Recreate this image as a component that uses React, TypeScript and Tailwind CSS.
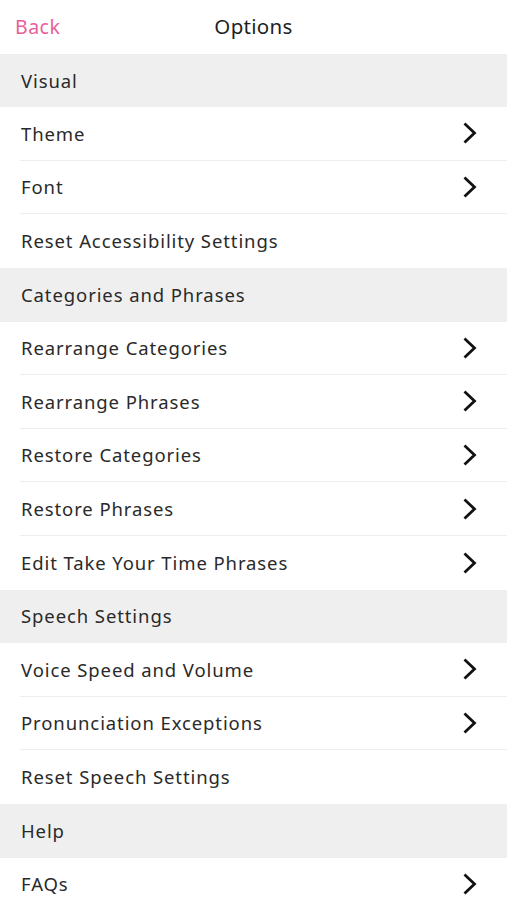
import type { ReactNode } from 'react'

type Item = { label: string; chevron?: boolean }
type Section = { title: string; items: Item[] }

const sections: Section[] = [
  {
    title: 'Visual',
    items: [
      { label: 'Theme', chevron: true },
      { label: 'Font', chevron: true },
      { label: 'Reset Accessibility Settings' },
    ],
  },
  {
    title: 'Categories and Phrases',
    items: [
      { label: 'Rearrange Categories', chevron: true },
      { label: 'Rearrange Phrases', chevron: true },
      { label: 'Restore Categories', chevron: true },
      { label: 'Restore Phrases', chevron: true },
      { label: 'Edit Take Your Time Phrases', chevron: true },
    ],
  },
  {
    title: 'Speech Settings',
    items: [
      { label: 'Voice Speed and Volume', chevron: true },
      { label: 'Pronunciation Exceptions', chevron: true },
      { label: 'Reset Speech Settings' },
    ],
  },
  {
    title: 'Help',
    items: [{ label: 'FAQs', chevron: true }],
  },
]

function Chevron() {
  return (
    <svg width="16" height="22" viewBox="0 0 16 22" fill="none" className="shrink-0">
      <path d="M3.5 2.5 L12.5 11 L3.5 19.5" stroke="#111" strokeWidth="2.8" strokeLinecap="square" />
    </svg>
  )
}

function SectionHeader({ children }: { children: ReactNode }) {
  return (
    <div className="h-[53.6px] bg-[#efefef] flex items-center pl-[21px] text-[18.5px] tracking-[0.9px] text-[#2a2a2a]">
      {children}
    </div>
  )
}

function Row({ item, last }: { item: Item; last: boolean }) {
  return (
    <div className="h-[53.6px] bg-white pl-[20px]">
      <div className={`h-full flex items-center justify-between pr-[29px] ${last ? '' : 'border-b border-[#eeeeee]'}`}>
        <span className="pl-[1px] text-[18.5px] tracking-[0.9px] text-[#2a2a2a]">{item.label}</span>
        {item.chevron && <Chevron />}
      </div>
    </div>
  )
}

export default function App() {
  return (
    <div className="w-[507px] h-[900px] overflow-hidden bg-white" style={{ fontFamily: '"Noto Sans", sans-serif' }}>
      <div className="h-[53.6px] relative flex items-center justify-center">
        <button className="absolute left-[15px] top-[13px] text-[19.5px] leading-[28px] tracking-[0.5px] text-[#e8609a]">Back</button>
        <span className="text-[20.5px] tracking-[0.3px] text-[#1f1f1f]">Options</span>
      </div>
      {sections.map((s) => (
        <div key={s.title}>
          <SectionHeader>{s.title}</SectionHeader>
          {s.items.map((it, i) => (
            <Row key={it.label} item={it} last={i === s.items.length - 1} />
          ))}
        </div>
      ))}
    </div>
  )
}
